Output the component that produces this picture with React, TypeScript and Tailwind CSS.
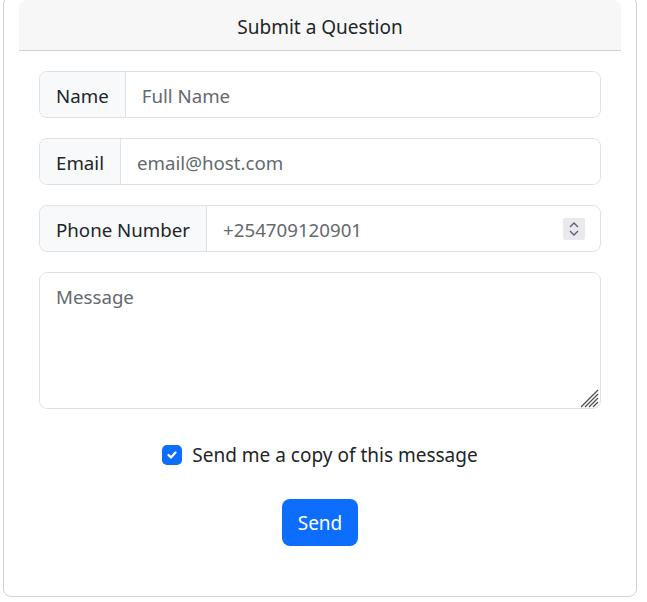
const font = "font-['Noto_Sans','Open_Sans',sans-serif]";

function InputGroup({ label, placeholder, spinner }: { label: string; placeholder: string; spinner?: boolean }) {
  return (
    <div className="flex h-[47px] rounded-lg border border-[#dee2e6] bg-white">
      <span className="flex items-center rounded-l-lg border-r border-[#dee2e6] bg-[#f8f9fa] px-4 pt-[3px] text-[18.7px] text-[#212529]">
        {label}
      </span>
      <input
        type="text"
        placeholder={placeholder}
        className="min-w-0 flex-1 rounded-r-lg bg-transparent px-4 pt-[3px] text-[18.7px] text-[#212529] outline-none placeholder:text-[#64696e]"
      />
      {spinner && (
        <div className="mr-[15px] flex items-center">
          <div className="flex h-[22px] w-[22px] items-center justify-center rounded-[2px] bg-[#e9e9ed]">
            <svg width="12" height="18" viewBox="0 0 12 18" fill="none" stroke="#5f5f6b" strokeWidth="1.4">
              <path d="M2 7 L6 3 L10 7" />
              <path d="M2 11 L6 15 L10 11" />
            </svg>
          </div>
        </div>
      )}
    </div>
  );
}

export default function App() {
  return (
    <div className={`${font} bg-white pl-[3px] pr-[10px]`}>
      <div className="-mt-[4px] rounded-lg border border-[#d3d3d3] px-[15px] pt-[3px] pb-[50px]">
        <div className="flex h-[51px] items-center justify-center rounded-t-lg border-b border-[#d0d0d0] bg-[#f7f7f7] pt-[5px] text-[19px] text-[#212529]">
          Submit a Question
        </div>
        <form className="flex flex-col gap-[20px] px-[20px] pt-[20px]" onSubmit={(e) => e.preventDefault()}>
          <InputGroup label="Name" placeholder="Full Name" />
          <InputGroup label="Email" placeholder="email@host.com" />
          <InputGroup label="Phone Number" placeholder="+254709120901" spinner />
          <div className="relative">
            <textarea
              placeholder="Message"
              className="block h-[137px] w-full resize-none rounded-lg border border-[#dee2e6] px-4 py-[10px] text-[18.7px] text-[#212529] outline-none placeholder:text-[#64696e]"
            />
            <svg className="absolute right-[2px] bottom-[1px]" width="19" height="19" viewBox="0 0 19 19" stroke="#505050" strokeWidth="1.3">
              <path d="M1 18 L18 1" />
              <path d="M5 18 L18 5" />
              <path d="M9 18 L18 9" />
              <path d="M13 18 L18 13" />
            </svg>
          </div>
          <label className="mt-[12px] flex items-center justify-center gap-[10px] text-[19px] text-[#212529]">
            <span className="flex h-[20px] w-[20px] items-center justify-center rounded-[5px] bg-[#0d6efd]">
              <svg width="14" height="14" viewBox="0 0 20 20" fill="none" stroke="white" strokeWidth="3.2" strokeLinecap="round" strokeLinejoin="round">
                <path d="M5 10 L8.5 13.5 L15 6.5" />
              </svg>
            </span>
            Send me a copy of this message
          </label>
          <div className="mt-[9px] flex justify-center">
            <button type="submit" className="h-[47px] w-[76px] rounded-lg bg-[#0d6efd] pt-[2px] text-[19px] text-white">
              Send
            </button>
          </div>
        </form>
      </div>
    </div>
  );
}
